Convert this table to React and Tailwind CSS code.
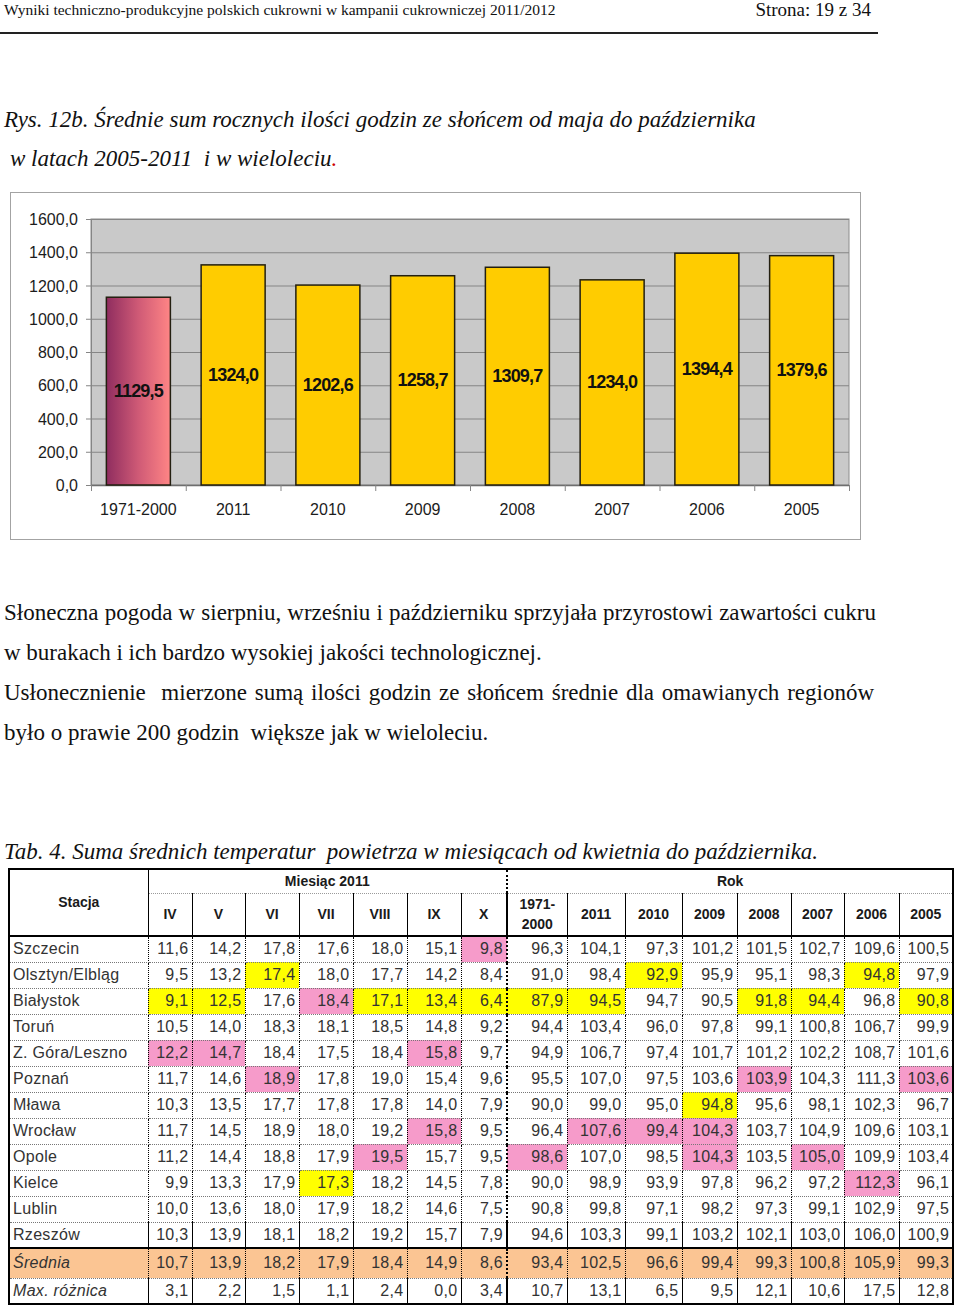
import React from "react";

const bars = [
  { label: "1971-2000", v: 1129.5, t: "1129,5", first: true },
  { label: "2011", v: 1324.0, t: "1324,0" },
  { label: "2010", v: 1202.6, t: "1202,6" },
  { label: "2009", v: 1258.7, t: "1258,7" },
  { label: "2008", v: 1309.7, t: "1309,7" },
  { label: "2007", v: 1234.0, t: "1234,0" },
  { label: "2006", v: 1394.4, t: "1394,4" },
  { label: "2005", v: 1379.6, t: "1379,6" },
];

// plot area inside the svg
const X0 = 80;
const Y0 = 26;
const W = 758;
const H = 266;
const CW = W / 8;
const BW = 64;
const yOf = (v) => Y0 + H - (v / 1600) * H;

function Chart() {
  const grid = [0, 200, 400, 600, 800, 1000, 1200, 1400, 1600];
  return (
    <svg width="849" height="346" viewBox="0 0 849 346" className="block">
      <defs>
        <linearGradient id="plum" x1="0" y1="0" x2="1" y2="0">
          <stop offset="0" stopColor="#8f2d5f" />
          <stop offset="0.5" stopColor="#cf5a76" />
          <stop offset="1" stopColor="#ff8585" />
        </linearGradient>
      </defs>
      <rect x={X0} y={Y0} width={W} height={H} fill="#c9c9c9" stroke="#8c8c8c" strokeWidth="1" />
      {grid.map((g) => (
        <g key={g}>
          <line x1={X0} x2={X0 + W} y1={yOf(g) + 0.5} y2={yOf(g) + 0.5} stroke="#858585" strokeWidth="1" />
          <line x1={X0 - 5} x2={X0} y1={yOf(g) + 0.5} y2={yOf(g) + 0.5} stroke="#858585" strokeWidth="1" />
          <text
            x={X0 - 13}
            y={yOf(g) + 6}
            textAnchor="end"
            fontFamily="'Liberation Sans', Arial, sans-serif"
            fontSize="16"
            fill="#1c1c1c"
          >
            {g.toFixed(1).replace(".", ",")}
          </text>
        </g>
      ))}
      <line x1={X0 + 0.5} x2={X0 + 0.5} y1={Y0} y2={Y0 + H} stroke="#858585" strokeWidth="1" />
      <line x1={X0} x2={X0 + W} y1={Y0 + H + 0.5} y2={Y0 + H + 0.5} stroke="#6e6e6e" strokeWidth="1.5" />
      {Array.from({ length: 9 }).map((_, i) => (
        <line
          key={i}
          x1={X0 + i * CW + 0.5}
          x2={X0 + i * CW + 0.5}
          y1={Y0 + H}
          y2={Y0 + H + 6}
          stroke="#858585"
          strokeWidth="1"
        />
      ))}
      {bars.map((b, i) => {
        const x = X0 + i * CW + (CW - BW) / 2;
        const top = yOf(b.v);
        const cx = X0 + i * CW + CW / 2;
        return (
          <g key={b.label}>
            <rect
              x={x}
              y={top}
              width={BW}
              height={Y0 + H - top}
              fill={b.first ? "url(#plum)" : "#ffcc00"}
              stroke="#231f10"
              strokeWidth="1.5"
            />
            <text
              x={cx}
              y={(top + Y0 + H) / 2 + 6}
              textAnchor="middle"
              fontFamily="'Liberation Sans', Arial, sans-serif"
              fontSize="18"
              fontWeight="700"
              letterSpacing="-0.8"
              fill="#111"
            >
              {b.t}
            </text>
            <text
              x={cx}
              y={322}
              textAnchor="middle"
              fontFamily="'Liberation Sans', Arial, sans-serif"
              fontSize="16"
              fill="#1c1c1c"
            >
              {b.label}
            </text>
          </g>
        );
      })}
    </svg>
  );
}

const months = ["IV", "V", "VI", "VII", "VIII", "IX", "X"];
const years = ["2011", "2010", "2009", "2008", "2007", "2006", "2005"];

const rows = [
  { n: "Szczecin", v: "11,6 14,2 17,8 17,6 18,0 15,1 9,8 96,3 104,1 97,3 101,2 101,5 102,7 109,6 100,5", h: { 6: "p" } },
  { n: "Olsztyn/Elbląg", v: "9,5 13,2 17,4 18,0 17,7 14,2 8,4 91,0 98,4 92,9 95,9 95,1 98,3 94,8 97,9", h: { 2: "y", 9: "y", 13: "y" } },
  {
    n: "Białystok",
    v: "9,1 12,5 17,6 18,4 17,1 13,4 6,4 87,9 94,5 94,7 90,5 91,8 94,4 96,8 90,8",
    h: { 0: "y", 1: "y", 3: "p", 4: "y", 5: "y", 6: "y", 7: "y", 8: "y", 11: "y", 12: "y", 14: "y" },
  },
  { n: "Toruń", v: "10,5 14,0 18,3 18,1 18,5 14,8 9,2 94,4 103,4 96,0 97,8 99,1 100,8 106,7 99,9", h: {} },
  { n: "Z. Góra/Leszno", v: "12,2 14,7 18,4 17,5 18,4 15,8 9,7 94,9 106,7 97,4 101,7 101,2 102,2 108,7 101,6", h: { 0: "p", 1: "p", 5: "p" } },
  { n: "Poznań", v: "11,7 14,6 18,9 17,8 19,0 15,4 9,6 95,5 107,0 97,5 103,6 103,9 104,3 111,3 103,6", h: { 2: "p", 11: "p", 14: "p" } },
  { n: "Mława", v: "10,3 13,5 17,7 17,8 17,8 14,0 7,9 90,0 99,0 95,0 94,8 95,6 98,1 102,3 96,7", h: { 10: "y" } },
  { n: "Wrocław", v: "11,7 14,5 18,9 18,0 19,2 15,8 9,5 96,4 107,6 99,4 104,3 103,7 104,9 109,6 103,1", h: { 5: "p", 8: "p", 9: "p", 10: "p" } },
  { n: "Opole", v: "11,2 14,4 18,8 17,9 19,5 15,7 9,5 98,6 107,0 98,5 104,3 103,5 105,0 109,9 103,4", h: { 4: "p", 7: "p", 10: "p", 12: "p" } },
  { n: "Kielce", v: "9,9 13,3 17,9 17,3 18,2 14,5 7,8 90,0 98,9 93,9 97,8 96,2 97,2 112,3 96,1", h: { 3: "y", 13: "p" } },
  { n: "Lublin", v: "10,0 13,6 18,0 17,9 18,2 14,6 7,5 90,8 99,8 97,1 98,2 97,3 99,1 102,9 97,5", h: {} },
  { n: "Rzeszów", v: "10,3 13,9 18,1 18,2 19,2 15,7 7,9 94,6 103,3 99,1 103,2 102,1 103,0 106,0 100,9", h: {}, last: true },
];

const fills = { p: "bg-[#f69bca]", y: "bg-[#ffff00]" };

function rightBorder(i) {
  if (i === 6) return "border-r-2 border-r-black";
  if (i === 14) return "";
  return "border-r border-r-black";
}

function Row({ r, bg, italic, bottom }) {
  const vals = r.v.split(" ");
  return (
    <tr className={bg}>
      <td className={`pl-[3px] border-r border-r-black ${bottom} ${italic ? "italic" : ""}`}>{r.n}</td>
      {vals.map((v, i) => (
        <td key={i} className={`text-right pr-[3px] ${rightBorder(i)} ${bottom} ${r.h && r.h[i] ? fills[r.h[i]] : ""}`}>
          {v}
        </td>
      ))}
    </tr>
  );
}

function Table() {
  const widths = [139, 44, 53, 54, 54, 54, 54, 46, 60, 58, 57, 55, 54, 53, 55, 54];
  return (
    <table className="table-fixed border-collapse border-2 border-black w-[944px] ml-[8px] font-['Liberation_Sans',Arial,sans-serif] text-[16px] text-[#333] tracking-[0.3px]">
      <colgroup>
        {widths.map((w, i) => (
          <col key={i} style={{ width: w }} />
        ))}
      </colgroup>
      <thead className="font-bold text-[14px] text-[#1a1a1a] tracking-normal">
        <tr className="h-[24px]">
          <th rowSpan={2} className="border-r border-r-black border-b-2 border-b-black pb-[1px]">
            Stacja
          </th>
          <th colSpan={7} className="border-r-2 border-r-black border-b border-dotted border-b-[#9a9a9a]">
            Miesiąc 2011
          </th>
          <th colSpan={8} className="border-b border-dotted border-b-[#9a9a9a]">
            Rok
          </th>
        </tr>
        <tr className="h-[43px]">
          {months.map((m, i) => (
            <th key={m} className={`border-b-2 border-b-black ${rightBorder(i)}`}>
              {m}
            </th>
          ))}
          <th className="border-b-2 border-b-black border-r border-r-black leading-[20px]">
            1971-
            <br />
            2000
          </th>
          {years.map((y, i) => (
            <th key={y} className={`border-b-2 border-b-black ${i < 6 ? "border-r border-r-black" : ""}`}>
              {y}
            </th>
          ))}
        </tr>
      </thead>
      <tbody>
        {rows.map((r) => (
          <Row
            key={r.n}
            r={r}
            bottom={r.last ? "border-b-2 border-b-black h-[26px]" : "border-b border-dotted border-b-[#777] h-[26px]"}
          />
        ))}
        <Row
          r={{ n: "Średnia", v: "10,7 13,9 18,2 17,9 18,4 14,9 8,6 93,4 102,5 96,6 99,4 99,3 100,8 105,9 99,3" }}
          bg="bg-[#fbc593]"
          italic
          bottom="border-b border-dotted border-b-[#777] h-[30px]"
        />
        <Row
          r={{ n: "Max. różnica", v: "3,1 2,2 1,5 1,1 2,4 0,0 3,4 10,7 13,1 6,5 9,5 12,1 10,6 17,5 12,8" }}
          italic
          bottom="h-[25px]"
        />
      </tbody>
    </table>
  );
}

export default function App() {
  return (
    <div className="w-[960px] min-h-[1314px] bg-white text-black font-['Liberation_Serif','Times_New_Roman',serif]">
      <div className="flex justify-between items-center w-[878px] pl-[4px] pr-[7px] h-[20px] leading-[20px] text-[#111]">
        <span className="text-[15.5px]">Wyniki techniczno-produkcyjne polskich cukrowni w kampanii cukrowniczej 2011/2012</span>
        <span className="text-[19px]">Strona: 19 z 34</span>
      </div>
      <div className="mt-[12px] h-[2px] w-[878px] bg-[#222]" />

      <div className="mt-[66px] italic text-[23px] leading-[39px] text-[#111]">
        <div className="pl-[4px]">Rys. 12b. Średnie sum rocznych ilości godzin ze słońcem od maja do października</div>
        <div className="pl-[10px]">
          w latach 2005-2011&nbsp; i w wieloleciu<span className="text-[#c00]">.</span>
        </div>
      </div>

      <div className="mt-[14px] ml-[10px] w-[851px] h-[348px] border border-[#a3a3a3]">
        <Chart />
      </div>

      <div className="mt-[53px] pl-[4px] w-[876px] text-[23px] leading-[40px] text-[#111]">
        <div className="text-justify [text-align-last:justify]">
          Słoneczna pogoda w sierpniu, wrześniu i październiku sprzyjała przyrostowi zawartości cukru
        </div>
        <div>w burakach i ich bardzo wysokiej jakości technologicznej.</div>
        <div className="text-justify [text-align-last:justify] pr-[2px]">
          Usłonecznienie&nbsp; mierzone sumą ilości godzin ze słońcem średnie dla omawianych regionów
        </div>
        <div>było o prawie 200 godzin&nbsp; większe jak w wieloleciu.</div>
      </div>

      <div className="mt-[84px] pl-[4px] italic text-[23px] leading-[30px] text-[#111]">
        Tab. 4. Suma średnich temperatur&nbsp; powietrza w miesiącach od kwietnia do października.
      </div>

      <div className="mt-[1px]">
        <Table />
      </div>
    </div>
  );
}
